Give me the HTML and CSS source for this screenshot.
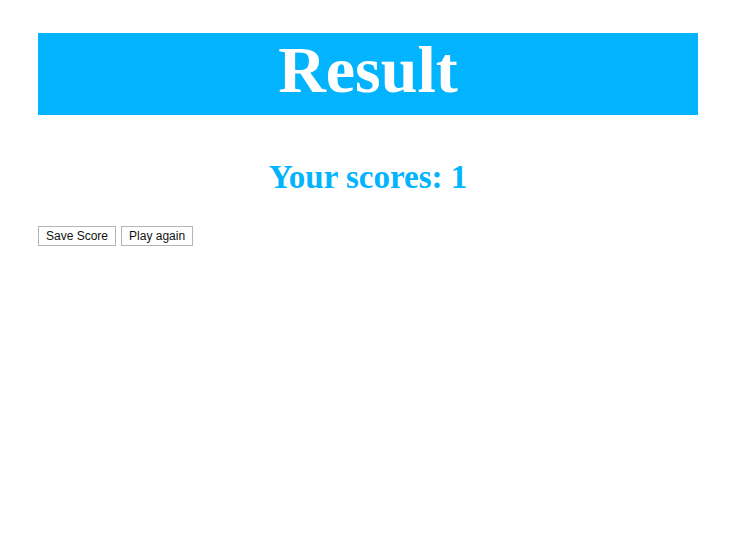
FILE: index.html
```html
<!DOCTYPE html>
<html>
<head>
<meta charset="utf-8">
<link rel="stylesheet" href="styles.css">
</head>
<body>
<div class="page">
  <div class="banner">Result</div>
  <h2 class="score">Your scores: 1</h2>
  <div class="actions">
    <button class="btn">Save Score</button>
    <button class="btn">Play again</button>
  </div>
</div>
</body>
</html>
```
FILE: styles.css
```css
html, body {
  margin: 0;
  padding: 0;
  background: #fff;
}
.page {
  width: 660px;
  margin-left: 38px;
  padding-top: 33px;
}
.banner {
  height: 82px;
  background: #02b3fd;
  color: #fff;
  font-family: "Liberation Serif", serif;
  font-weight: bold;
  font-size: 66px;
  line-height: 74px;
  text-align: center;
}
.score {
  margin: 43px 0 0;
  font-family: "Liberation Serif", serif;
  font-weight: bold;
  font-size: 33px;
  line-height: 38px;
  color: #02b3fd;
  text-align: center;
}
.actions {
  display: flex;
  gap: 5px;
  margin-top: 30px;
}
.btn {
  height: 20px;
  padding: 0 7px;
  border: 1px solid #b5b5b5;
  background: #fff;
  color: #111;
  font-family: "Liberation Sans", Arial, sans-serif;
  font-size: 12px;
  line-height: 18px;
  border-radius: 0;
}
```
